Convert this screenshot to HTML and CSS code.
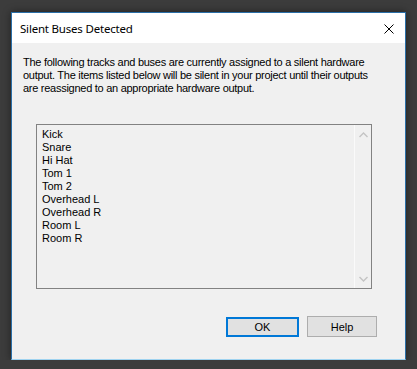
FILE: index.html
```html
<!DOCTYPE html>
<html lang="en">
<head>
    <meta charset="UTF-8">
    <title>Silent Buses Detected</title>
    <link rel="stylesheet" href="styles.css">
</head>
<body>
    <!-- Dialog window -->
    <div class="window">
        <div class="titlebar">
            <span class="title">Silent Buses Detected</span>
            <svg class="close" width="10" height="10" viewBox="0 0 10 10">
                <path d="M0.5 0.5 L9.5 9.5 M9.5 0.5 L0.5 9.5" stroke="#000" stroke-width="1" fill="none"/>
            </svg>
        </div>

        <div class="content">
            <p class="message">The following tracks and buses are currently assigned to a silent hardware<br>output. The items listed below will be silent in your project until their outputs<br>are reassigned to an appropriate hardware output.</p>

            <div class="listbox">
                <ul class="items">
                    <li>Kick</li>
                    <li>Snare</li>
                    <li>Hi Hat</li>
                    <li>Tom 1</li>
                    <li>Tom 2</li>
                    <li>Overhead L</li>
                    <li>Overhead R</li>
                    <li>Room L</li>
                    <li>Room R</li>
                </ul>
                <div class="scrollbar">
                    <svg width="9" height="6" viewBox="0 0 9 6"><path d="M0.5 5 L4.5 1 L8.5 5" stroke="#c4c4c4" stroke-width="1.4" fill="none"/></svg>
                    <svg width="9" height="6" viewBox="0 0 9 6"><path d="M0.5 1 L4.5 5 L8.5 1" stroke="#c4c4c4" stroke-width="1.4" fill="none"/></svg>
                </div>
            </div>

            <div class="buttons">
                <button class="btn default">OK</button>
                <button class="btn">Help</button>
            </div>
        </div>
    </div>
</body>
</html>
```

FILE: styles.css
```css
body {
    margin: 0;
    padding: 12px 12px 0 11px;
    background-color: #3c3c3c;
    font-family: 'Liberation Sans', Arial, sans-serif;
    font-size: 11px;
    color: #000;
}

/* Window frame */
.window {
    width: 393px;
    height: 346px;
    background-color: #f0f0f0;
    border: 1px solid #2a6fa8;
    border-bottom-color: #9fd3f0;
    box-shadow: 0 0 8px rgba(0, 0, 0, 0.45);
    display: flex;
    flex-direction: column;
}

.titlebar {
    height: 30px;
    background-color: #fff;
    display: flex;
    align-items: center;
    justify-content: space-between;
    padding: 0 11px 0 8px;
}

.title {
    font-family: 'Noto Sans', 'Open Sans', sans-serif;
    font-size: 11.5px;
    letter-spacing: -0.2px;
    color: #000;
    margin-top: 1px;
}

.close {
    display: block;
    margin-top: 1px;
}

/* Dialog body */
.content {
    flex: 1;
    display: flex;
    flex-direction: column;
    padding: 13px 0 0 11px;
}

.message {
    margin: 0;
    white-space: nowrap;
    letter-spacing: -0.27px;
    line-height: 13px;
}

.listbox {
    margin: 29px 0 0 13px;
    width: 334px;
    height: 163px;
    border: 1px solid #828282;
    display: flex;
}

.items {
    flex: 1;
    list-style: none;
    margin: 0;
    padding: 3px 0 0 5px;
    line-height: 13px;
}

.scrollbar {
    width: 16px;
    border-left: 1px solid #fafafa;
    display: flex;
    flex-direction: column;
    align-items: center;
    justify-content: space-between;
    padding: 7px 0 6px;
}

.scrollbar svg {
    display: block;
}

.buttons {
    display: flex;
    justify-content: flex-end;
    gap: 8px;
    margin: 27px 28px 0 0;
}

.btn {
    width: 70px;
    height: 21px;
    padding: 0;
    font-family: 'Liberation Sans', Arial, sans-serif;
    font-size: 11px;
    color: #000;
    background-color: #e1e1e1;
    border: 1px solid #adadad;
}

.btn.default {
    width: 73px;
    height: 20px;
    margin-top: 1px;
    border: 2px solid #0078d7;
}
```
